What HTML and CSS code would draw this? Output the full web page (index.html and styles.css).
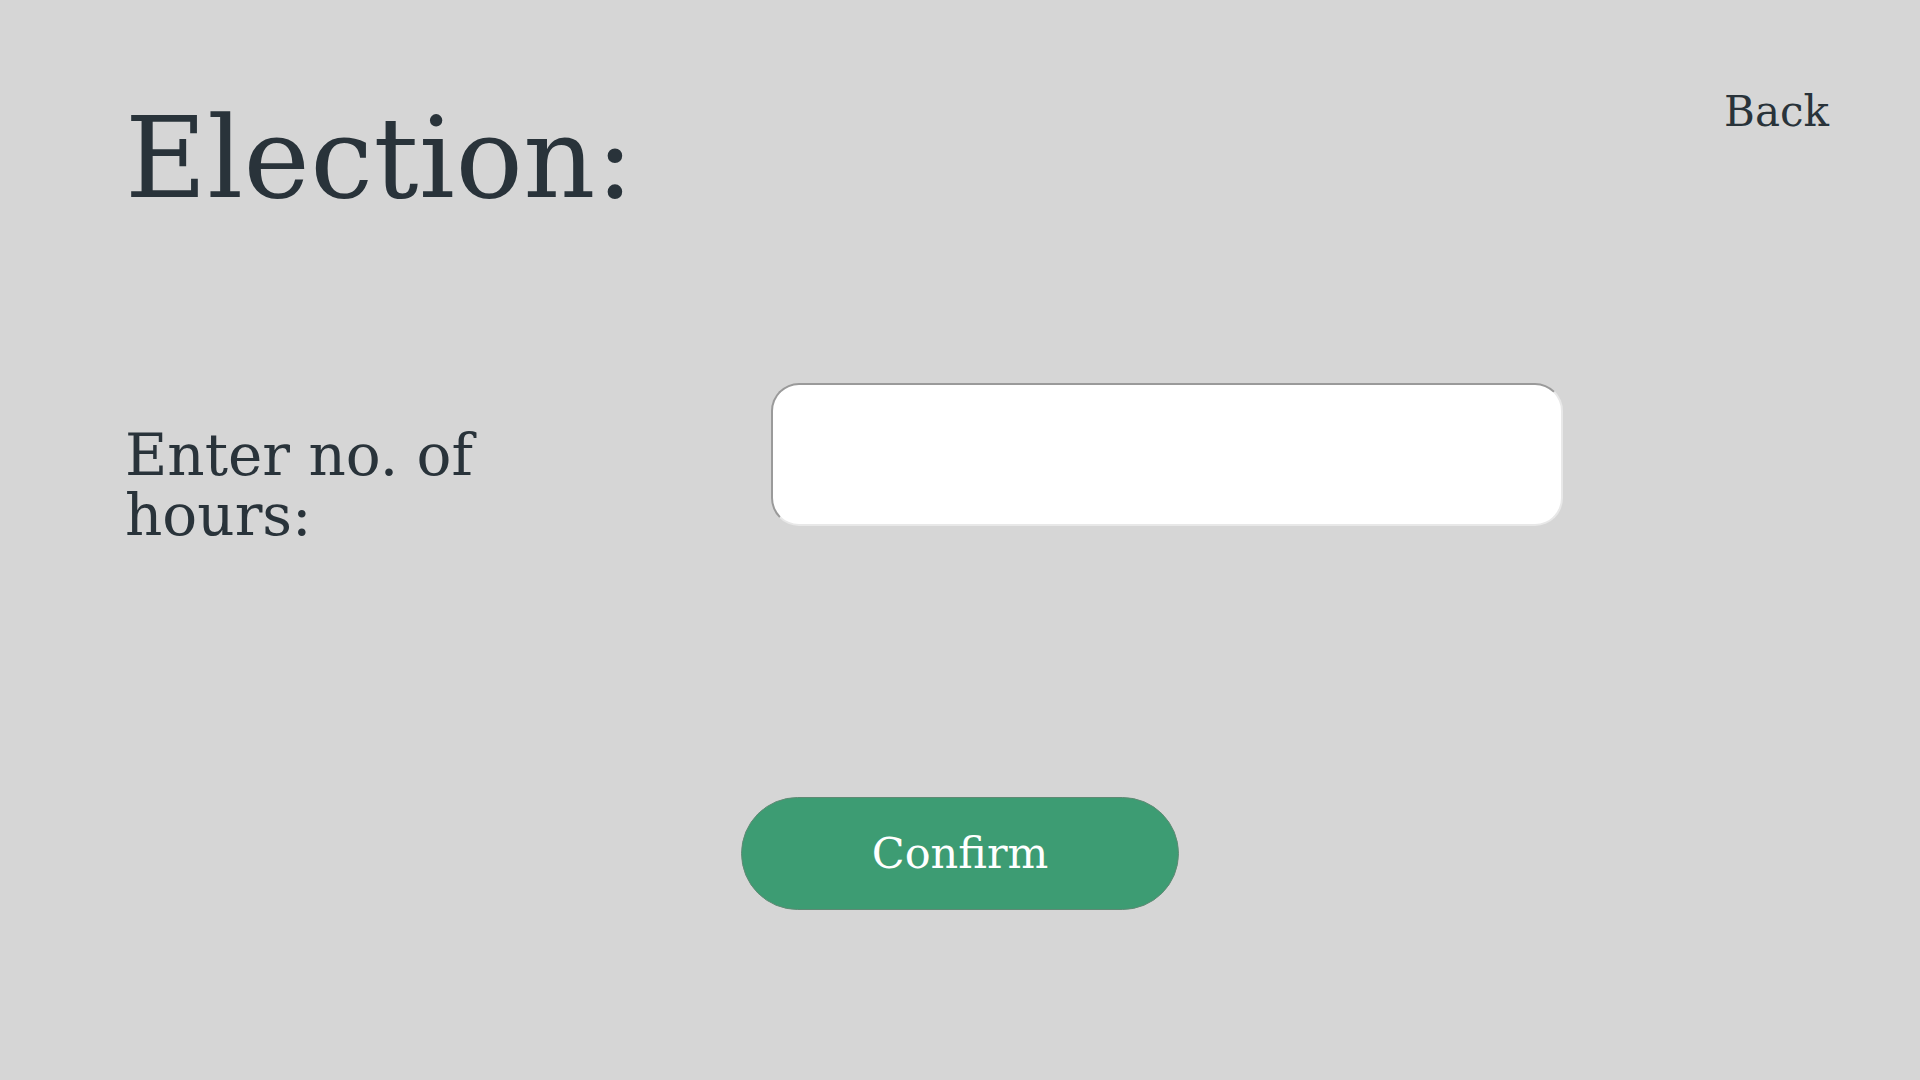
FILE: index.html
```html
<!DOCTYPE html>
<html lang="en">
<head>
<meta charset="utf-8">
<title>Election</title>
<link rel="stylesheet" href="styles.css">
</head>
<body>
<div class="page">
  <header class="header">
    <h1 class="title">Election:</h1>
    <a class="back" href="#">Back</a>
  </header>
  <div class="form-row">
    <label class="label" for="hours">Enter no. of hours:</label>
    <input class="input" id="hours" type="text">
  </div>
  <div class="actions">
    <button class="confirm" type="button">Confirm</button>
  </div>
</div>
</body>
</html>
```
FILE: styles.css
```css
html, body {
  margin: 0;
  padding: 0;
  background: #d6d6d6;
}
body {
  font-family: "DejaVu Serif", "Liberation Serif", serif;
  color: #29333a;
  width: 1920px;
  height: 1080px;
  overflow: hidden;
}
.page {
  display: flex;
  flex-direction: column;
  padding: 91px 91px 0 125px;
}
.header {
  display: flex;
  justify-content: space-between;
  align-items: flex-start;
}
.title {
  margin: 11px 0 0 0;
  font-size: 112px;
  line-height: 1;
  font-weight: normal;
  letter-spacing: 0.5px;
}
.back {
  font-size: 42px;
  line-height: 1;
  color: #29333a;
  text-decoration: none;
}
.form-row {
  display: grid;
  grid-template-columns: 646px 792px;
  height: 143px;
  margin-top: 169px;
  align-items: start;
}
.label {
  max-width: 420px;
  margin-top: 42px;
  font-size: 58px;
  line-height: 60px;
}
.input {
  box-sizing: border-box;
  width: 792px;
  height: 143px;
  margin: 0;
  padding: 0 24px;
  background: #ffffff;
  border: 2px solid;
  border-color: #9a9a9a #e8e8e8 #e8e8e8 #9a9a9a;
  border-radius: 28px;
  font-family: inherit;
  font-size: 40px;
  outline: none;
}
.actions {
  display: flex;
  justify-content: center;
  margin: 271px -91px 0 -125px;
}
.confirm {
  box-sizing: border-box;
  width: 438px;
  height: 113px;
  border: 1px solid #5f8a74;
  border-radius: 57px;
  background: #3d9c73;
  color: #ffffff;
  font-family: "DejaVu Serif", "Liberation Serif", serif;
  font-size: 43px;
  line-height: 1;
  display: flex;
  align-items: center;
  justify-content: center;
  padding: 0;
  cursor: pointer;
}
```
